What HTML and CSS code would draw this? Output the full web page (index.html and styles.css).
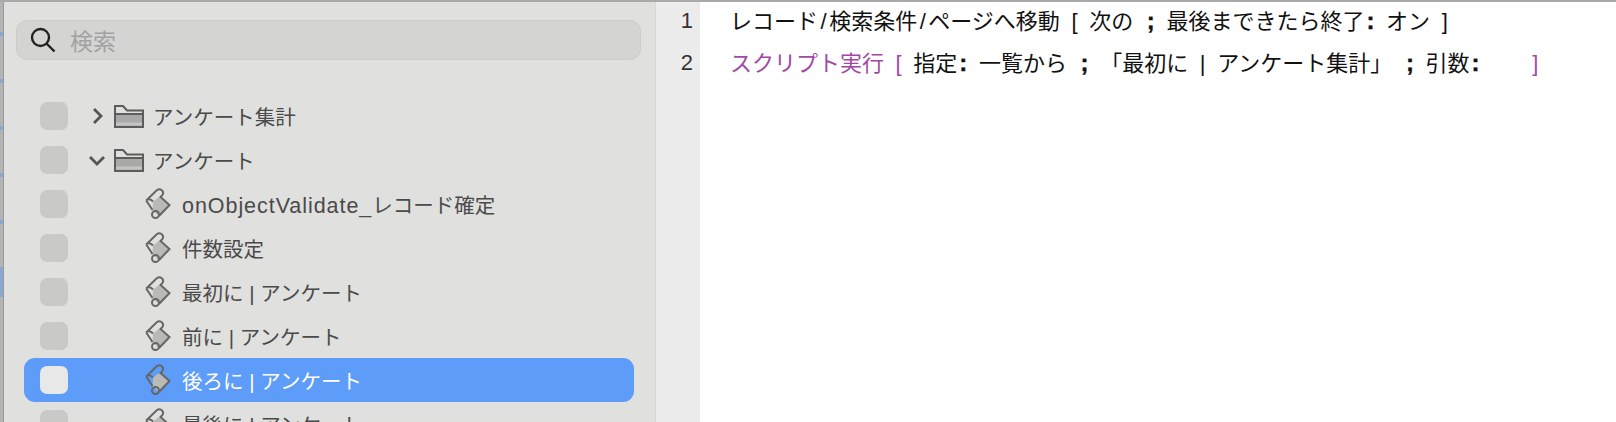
FILE: index.html
```html
<!DOCTYPE html>
<html lang="ja">
<head>
    <meta charset="UTF-8">
    <link rel="stylesheet" href="styles.css">
    <title>スクリプトワークスペース</title>
</head>
<body>
    <svg class="defs" width="0" height="0">
        <symbol id="folder" viewBox="0 0 30 23">
            <path class="folder-fill" d="M1 9h28v13H1z"/>
            <path class="folder-strip" d="M2 17.500h26v3H2z"/>
            <path class="folder-line" d="M1 22V1h8l4 4.500h16V22zM1 9h28"/>
        </symbol>
        <symbol id="script" viewBox="0 0 26 32">
            <path class="script-body" d="M8 13.500l6-4.500 10.500 8-11 11-6-6z"/>
            <path class="script-line" d="M1.200 12.500L12 2Q15 0 17.500 3Q19 5.500 17 7.500L15.500 9L24.500 17L14 28M1.200 12.500L7.500 22M1.200 12.500Q4 9.500 8 13.500"/>
            <circle class="script-line" cx="10.500" cy="26.500" r="3.500"/>
        </symbol>
    </svg>

    <div class="top-line"></div>
    <div class="window">
        <div class="edge">
            <i class="mark"></i><i class="mark"></i><i class="mark"></i><i class="mark"></i><i class="mark"></i><i class="mark tall"></i>
        </div>

        <aside class="sidebar">
            <div class="search">
                <svg class="search-icon" viewBox="0 0 26 26"><circle cx="10.500" cy="10.500" r="8.500"/><path d="M16.500 16.500L24.500 24.500"/></svg>
                <span>検索</span>
            </div>
            <ul class="tree">
                <li class="row">
                    <span class="check"></span>
                    <span class="arrow"><svg viewBox="0 0 18 18"><path d="M6 2l7 7-7 7"/></svg></span>
                    <svg class="folder"><use href="#folder"/></svg>
                    <span class="label">アンケート集計</span>
                </li>
                <li class="row">
                    <span class="check"></span>
                    <span class="arrow"><svg viewBox="0 0 18 18"><path d="M2 6l7 7 7-7"/></svg></span>
                    <svg class="folder"><use href="#folder"/></svg>
                    <span class="label">アンケート</span>
                </li>
                <li class="row child">
                    <span class="check"></span>
                    <svg class="script"><use href="#script"/></svg>
                    <span class="label"><span class="latin">onObjectValidate_</span>レコード確定</span>
                </li>
                <li class="row child">
                    <span class="check"></span>
                    <svg class="script"><use href="#script"/></svg>
                    <span class="label">件数設定</span>
                </li>
                <li class="row child">
                    <span class="check"></span>
                    <svg class="script"><use href="#script"/></svg>
                    <span class="label">最初に | アンケート</span>
                </li>
                <li class="row child">
                    <span class="check"></span>
                    <svg class="script"><use href="#script"/></svg>
                    <span class="label">前に | アンケート</span>
                </li>
                <li class="row child selected">
                    <span class="check"></span>
                    <svg class="script"><use href="#script"/></svg>
                    <span class="label">後ろに | アンケート</span>
                </li>
                <li class="row child">
                    <span class="check"></span>
                    <svg class="script"><use href="#script"/></svg>
                    <span class="label">最後に | アンケート</span>
                </li>
            </ul>
        </aside>

        <div class="gutter">
            <div class="num">1</div>
            <div class="num">2</div>
        </div>

        <main class="editor">
            <div class="line">レコード<span class="slash">/</span>検索条件<span class="slash">/</span>ページへ移動 [ 次の <b>;</b> 最後まできたら終了<b>:</b> オン ]</div>
            <div class="line"><span class="purple">スクリプト実行 [</span> 指定<b>:</b> 一覧から <b>;</b> 「最初に | アンケート集計」 <b>;</b> 引数<b>:</b> <span class="purple gap">]</span></div>
        </main>
    </div>
</body>
</html>
```

FILE: styles.css
```css
* {
    box-sizing: border-box;
}

html, body {
    margin: 0;
    padding: 0;
    height: 100%;
    overflow: hidden;
}

body {
    font-family: 'Liberation Sans', 'Noto Sans CJK JP', sans-serif;
    background-color: #fff;
    display: flex;
    flex-direction: column;
}

.defs {
    display: block;
    height: 0;
}

.top-line {
    height: 2px;
    flex: none;
    background-color: #a9a9a9;
}

.window {
    display: flex;
    flex: 1;
    min-height: 0;
}

.edge {
    width: 4px;
    flex: none;
    background-color: #b4b4b4;
    border-right: 1px solid #9a9a9a;
    padding-top: 30px;
}

.mark {
    display: block;
    height: 4px;
    margin-bottom: 43px;
    background-color: #8aa8cf;
}

.mark.tall {
    height: 30px;
}

.sidebar {
    width: 652px;
    flex: none;
    background-color: #e0e0de;
    border-right: 1px solid #d6d6d6;
    padding: 18px 14px 0 12px;
    overflow: hidden;
}

.search {
    display: flex;
    align-items: center;
    height: 40px;
    background-color: #d4d4d2;
    border: 1px solid #cdcdcb;
    border-radius: 11px;
    padding-left: 13px;
    color: #a2a2a2;
    font-size: 23px;
}

.search span {
    margin-left: 14px;
}

.search-icon {
    width: 26px;
    height: 26px;
    fill: none;
    stroke: #222;
    stroke-width: 2.400;
}

.tree {
    list-style: none;
    margin: 0;
    padding: 0;
    margin-top: 34px;
}

.row {
    display: flex;
    align-items: center;
    height: 44px;
    margin-left: 8px;
    margin-right: 7px;
    padding-left: 16px;
    border-radius: 11px;
    color: #4a4a4a;
    font-size: 20.500px;
    white-space: nowrap;
}

.latin {
    font-size: 21.500px;
    letter-spacing: 0.950px;
}

.check {
    width: 28px;
    height: 28px;
    flex: none;
    border-radius: 7px;
    background-color: #c9c9c7;
}

.arrow {
    width: 46px;
    flex: none;
    display: flex;
    justify-content: flex-end;
    padding-right: 8px;
}

.arrow svg {
    width: 18px;
    height: 18px;
    fill: none;
    stroke: #555;
    stroke-width: 2.800;
}

.folder {
    width: 30px;
    height: 23px;
    flex: none;
}

.folder-fill {
    fill: #a9a9a7;
}

.folder-strip {
    fill: #c4c4c2;
}

.folder-line {
    fill: none;
    stroke: #5c5c5c;
    stroke-width: 2;
}

.folder + .label {
    margin-left: 9px;
}

.script {
    width: 26px;
    height: 32px;
    flex: none;
    margin-left: 77px;
    margin-right: 11px;
}

.script-body {
    fill: #b9b9b7;
}

.script-line {
    fill: none;
    stroke: #666;
    stroke-width: 2;
}

.selected {
    background-color: #5e9cf9;
    color: #fff;
}

.selected .check {
    background-color: #e8e8e8;
}

.selected .script-body {
    fill: #8fb8fb;
}

.selected .script-line {
    stroke: #fff;
}

.gutter {
    width: 44px;
    flex: none;
    background-color: #ececec;
    padding-right: 7px;
}

.num {
    height: 42px;
    line-height: 37px;
    text-align: right;
    color: #333;
    font-size: 22px;
}

.editor {
    flex: 1;
    padding-left: 30px;
}

.line {
    height: 42px;
    line-height: 37px;
    color: #111;
    font-size: 22px;
    word-spacing: 5.500px;
    white-space: pre;
}

.line b {
    font-size: 24px;
    margin-left: 2px;
    -webkit-text-stroke: 0.400px #111;
}

.slash {
    margin: 0 2.500px;
}

.purple {
    color: #a349a4;
}

.gap {
    margin-left: 41px;
}
```
